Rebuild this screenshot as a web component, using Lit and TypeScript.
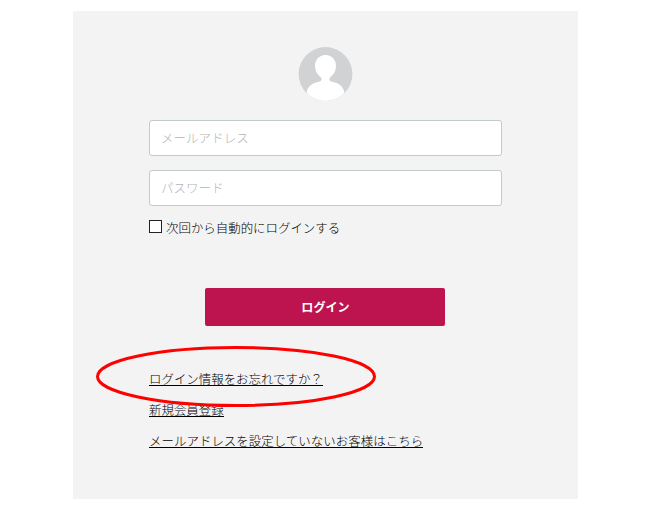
import { LitElement, html, css } from "lit";
import { customElement } from "lit/decorators.js";

@customElement("app-root")
class AppRoot extends LitElement {
  static styles = css`
    :host {
      display: block;
      box-sizing: border-box;
      height: 510px;
      padding: 11px 72px 11px 73px;
      background: #fff;
      color: #000;
      font: 300 12.45px/18px "Noto Sans CJK JP", sans-serif;
    }
    .panel {
      position: relative;
      box-sizing: border-box;
      height: 488px;
      padding: 36px 76px 0;
      background: #f3f3f3;
      display: flex;
      flex-direction: column;
    }
    .avatar {
      display: block;
      width: 55px;
      height: 54px;
      align-self: center;
      margin-bottom: 19px;
    }
    .field {
      box-sizing: border-box;
      width: 100%;
      height: 36px;
      margin: 0 0 14px;
      padding: 0 11px;
      border: 1px solid #c2caca;
      border-radius: 3px;
      background: #fff;
      font: inherit;
      letter-spacing: 0.1px;
      outline: none;
    }
    .field::placeholder {
      color: #b4b4b4;
      opacity: 1;
    }
    .remember {
      display: flex;
      align-items: center;
      gap: 4px;
      height: 18px;
      margin-top: -1px;
    }
    .check {
      appearance: none;
      box-sizing: border-box;
      width: 13px;
      height: 13px;
      margin: -3px 0 0;
      border: 1px solid #222;
      background: #fff;
    }
    .submit {
      align-self: center;
      width: 240px;
      height: 38px;
      margin: 51px 1px 46px 0;
      padding: 0 0 1px 1px;
      border: 0;
      border-radius: 2px;
      background: #bd1450;
      color: #fff;
      font: inherit;
      font-size: 12.1px;
      font-weight: 700;
    }
    .links {
      display: flex;
      flex-direction: column;
      align-items: flex-start;
      gap: 17px;
    }
    .link {
      box-sizing: border-box;
      height: 14px;
      border-bottom: 1px solid #000;
      color: inherit;
      line-height: 15px;
      text-decoration: none;
      white-space: nowrap;
    }
    .link.wide {
      letter-spacing: 0.04px;
    }
    .ring {
      position: absolute;
      left: 23px;
      top: 335px;
      width: 280px;
      height: 61px;
      pointer-events: none;
    }
  `;

  render() {
    return html`
      <main class="panel">
        <svg class="avatar" viewBox="-0.500 0 55 54" aria-hidden="true">
          <defs><clipPath id="disc"><circle cx="27" cy="27" r="26.900" /></clipPath></defs>
          <circle cx="27" cy="27" r="26.900" fill="#d1d2d4" />
          <path
            clip-path="url(#disc)"
            fill="#fff"
            d="M27 8C20.500 8 16.500 13 16.500 19C16.500 23.500 18.500 27 21.500 29.500C23.300 31 23.800 33.500 21.500 34.400C15 35.500 9.500 38.500 8.300 44.500V54H45.700V44.500C44.500 38.500 39 35.500 32.500 34.400C30.200 33.500 30.700 31 32.500 29.500C35.500 27 37.500 23.500 37.500 19C37.500 13 33.500 8 27 8Z"
          />
        </svg>
        <input class="field" type="text" placeholder="メールアドレス" />
        <input class="field" type="password" placeholder="パスワード" />
        <label class="remember">
          <input class="check" type="checkbox" />
          <span>次回から自動的にログインする</span>
        </label>
        <button class="submit">ログイン</button>
        <nav class="links">
          <a class="link" href="#">ログイン情報をお忘れですか？</a>
          <a class="link" href="#">新規会員登録</a>
          <a class="link wide" href="#">メールアドレスを設定していないお客様はこちら</a>
        </nav>
        <svg class="ring" viewBox="0 0 280 61" aria-hidden="true">
          <ellipse cx="140" cy="30.500" rx="138.500" ry="29" fill="none" stroke="#f00" stroke-width="3" />
        </svg>
      </main>
    `;
  }
}
